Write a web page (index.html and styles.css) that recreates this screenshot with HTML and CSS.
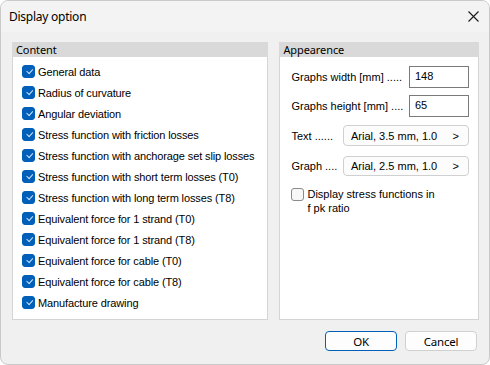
FILE: index.html
```html
<!DOCTYPE html>
<html>
<head>
<meta charset="utf-8">
<link rel="stylesheet" href="styles.css">
</head>
<body>
<div class="window">
  <div class="titlebar">
    <span class="title">Display option</span>
    <svg class="close" width="11" height="11" viewBox="0 0 11 11"><path d="M0.5 0.5 L10.5 10.5 M10.5 0.5 L0.5 10.5" stroke="#1a1a1a" stroke-width="1.1" fill="none"/></svg>
  </div>
  <div class="main">
    <section class="group content">
      <div class="ghead">Content</div>
      <div class="gbody list">
        <label class="row"><span class="cb on"></span>General data</label>
        <label class="row"><span class="cb on"></span>Radius of curvature</label>
        <label class="row"><span class="cb on"></span>Angular deviation</label>
        <label class="row"><span class="cb on"></span>Stress function with friction losses</label>
        <label class="row"><span class="cb on"></span>Stress function with anchorage set slip losses</label>
        <label class="row"><span class="cb on"></span>Stress function with short term losses (T0)</label>
        <label class="row"><span class="cb on"></span>Stress function with long term losses (T8)</label>
        <label class="row"><span class="cb on"></span>Equivalent force for 1 strand (T0)</label>
        <label class="row"><span class="cb on"></span>Equivalent force for 1 strand (T8)</label>
        <label class="row"><span class="cb on"></span>Equivalent force for cable (T0)</label>
        <label class="row"><span class="cb on"></span>Equivalent force for cable (T8)</label>
        <label class="row"><span class="cb on"></span>Manufacture drawing</label>
      </div>
    </section>
    <section class="group appear">
      <div class="ghead">Appearence</div>
      <div class="gbody form">
        <div class="frow"><span class="lbl">Graphs width [mm] .....</span><span class="input">148</span></div>
        <div class="frow r2"><span class="lbl">Graphs height [mm] ....</span><span class="input">65</span></div>
        <div class="frow r3"><span class="lbl">Text ......</span><span class="pick"><span>Arial, 3.5 mm, 1.0</span><span>&gt;</span></span></div>
        <div class="frow r4"><span class="lbl">Graph ....</span><span class="pick"><span>Arial, 2.5 mm, 1.0</span><span>&gt;</span></span></div>
        <label class="crow"><span class="cb"></span><span>Display stress functions in<br>f pk ratio</span></label>
      </div>
    </section>
  </div>
  <div class="footer">
    <span class="btn ok">OK</span>
    <span class="btn">Cancel</span>
  </div>
</div>
</body>
</html>
```
FILE: styles.css
```css
html, body { margin: 0; padding: 0; background: #ffffff; }
.window {
  width: 490px; height: 365px; box-sizing: border-box;
  border: 1px solid #c9c9c9; border-radius: 8px;
  background: #f0f0f0; overflow: hidden;
  display: flex; flex-direction: column;
  font-family: "Liberation Sans", Arial, sans-serif; font-size: 11px; color: #000;
}
.titlebar {
  height: 31px; flex: none; background: #f3f3f3;
  display: flex; align-items: center; justify-content: space-between;
  padding: 0 10px 0 8px;
}
.title { font-family: "Noto Sans", sans-serif; font-size: 12px; letter-spacing: -0.25px; }
.close { margin-top: -1px; }
.main { display: flex; gap: 11px; padding: 10px 10px 0 11px; height: 278px; }
.group { display: flex; flex-direction: column; }
.content { width: 257px; }
.appear { width: 200px; }
.ghead {
  height: 15px; background: #d9d9d9; flex: none;
  font-family: "Noto Sans", sans-serif; font-size: 11px; letter-spacing: -0.1px;
  line-height: 15px; padding-left: 4px;
}
.gbody {
  flex: 1; background: #fff; border: 1px solid #d4d4d4; border-top: none;
}
.list { padding: 4px 0 0 9px; letter-spacing: -0.12px; }
.row { display: flex; align-items: center; height: 21px; gap: 3px; }
.cb {
  width: 13px; height: 13px; box-sizing: border-box; flex: none;
  border: 1px solid #8a8a8a; border-radius: 3px; background: #f7f7f7;
  position: relative;
}
.cb.on { background: #005fb8; border-color: #005fb8; }
.cb.on::after {
  content: ""; position: absolute; left: 3px; top: 2px;
  width: 5px; height: 3px;
  border-left: 1px solid #cfe3f7; border-bottom: 1px solid #cfe3f7;
  transform: rotate(-48deg) translate(0px, 1px);
}
.form { padding: 9px 9px 0 11px; display: flex; flex-direction: column; }
.frow { display: flex; align-items: center; height: 22px; }
.r2 { margin-top: 7px; }
.r3 { margin-top: 8px; height: 21px; }
.r4 { margin-top: 10px; height: 20px; }
.lbl { white-space: nowrap; }
.input {
  margin-left: auto; width: 60px; height: 22px; box-sizing: border-box;
  border: 1px solid #7a7a7a; background: #fff; padding: 3px 0 0 5px;
}
.pick {
  margin-left: auto; width: 126px; height: 100%; box-sizing: border-box;
  border: 1px solid #d0d0d0; border-radius: 4px; background: #fcfcfc;
  display: flex; align-items: center; justify-content: space-between;
  padding: 0 9px 0 7px;
}
.crow { display: flex; align-items: flex-start; gap: 3px; margin-top: 11px; line-height: 14px; }
.crow .cb { margin-top: 1px; }
.footer {
  display: flex; justify-content: flex-end; gap: 8px;
  padding: 11px 12px 0 0;
}
.btn {
  width: 72px; height: 20px; box-sizing: border-box;
  border: 1px solid #d0d0d0; border-radius: 4px; background: #fdfdfd;
  display: flex; align-items: center; justify-content: center;
  font-family: "Noto Sans", sans-serif; font-size: 11.5px; letter-spacing: -0.2px;
}
.btn.ok { border-color: #005fb8; }
```
